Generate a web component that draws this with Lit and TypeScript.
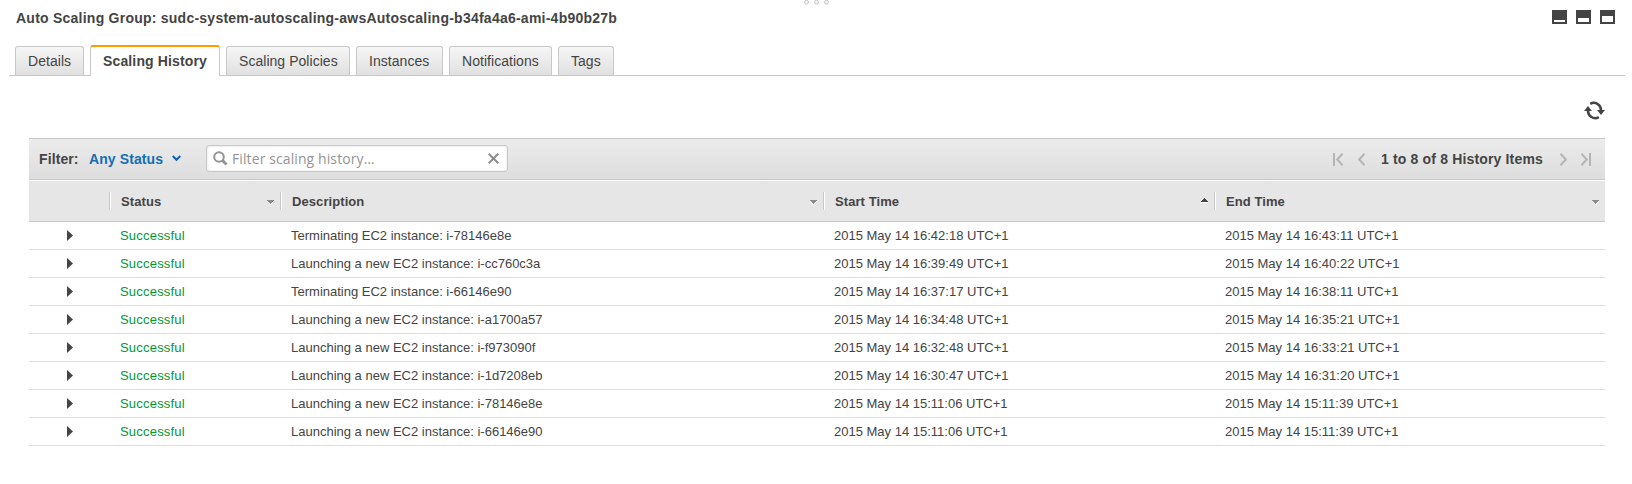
import { LitElement, html, css, svg } from "lit";
import { customElement } from "lit/decorators.js";

interface Activity {
  description: string;
  start: string;
  end: string;
}

const activities: Activity[] = [
  { description: "Terminating EC2 instance: i-78146e8e", start: "16:42:18", end: "16:43:11" },
  { description: "Launching a new EC2 instance: i-cc760c3a", start: "16:39:49", end: "16:40:22" },
  { description: "Terminating EC2 instance: i-66146e90", start: "16:37:17", end: "16:38:11" },
  { description: "Launching a new EC2 instance: i-a1700a57", start: "16:34:48", end: "16:35:21" },
  { description: "Launching a new EC2 instance: i-f973090f", start: "16:32:48", end: "16:33:21" },
  { description: "Launching a new EC2 instance: i-1d7208eb", start: "16:30:47", end: "16:31:20" },
  { description: "Launching a new EC2 instance: i-78146e8e", start: "15:11:06", end: "15:11:39" },
  { description: "Launching a new EC2 instance: i-66146e90", start: "15:11:06", end: "15:11:39" },
];

const tabs = [
  { name: "Details", width: 69 },
  { name: "Scaling History", width: 130 },
  { name: "Scaling Policies", width: 124 },
  { name: "Instances", width: 87 },
  { name: "Notifications", width: 103 },
  { name: "Tags", width: 56 },
];
const columns = ["Status", "Description", "Start Time", "End Time"];
const when = (time: string) => `2015 May 14 ${time} UTC+1`;

@customElement("app-root")
export class AppRoot extends LitElement {
  static styles = css`
    :host {
      display: block;
      position: relative;
      height: 484px;
      overflow: hidden;
      background: #fff;
      color: #444;
      font: 14px/18px "Liberation Sans", Arial, sans-serif;
    }
    svg { display: block; flex: none; }
    .grip { position: absolute; left: 804px; top: 0; }
    .head {
      display: flex;
      justify-content: space-between;
      padding: 9px 17px 0 16px;
      height: 36px;
      box-sizing: border-box;
      font-weight: bold;
    }
    .title { letter-spacing: 0.24px; }
    .panes { display: flex; gap: 9px; padding-top: 1px; }
    .tabs {
      display: flex;
      align-items: flex-end;
      gap: 6px;
      height: 39px;
      margin: 0 7px 0 9px;
      padding-left: 6px;
      border-bottom: 1px solid #c8c8c8;
    }
    .tab {
      box-sizing: border-box;
      height: 29px;
      padding: 5px 0 0 12px;
      border: 1px solid #c8c8c8;
      border-bottom: 0;
      border-radius: 3px 3px 0 0;
      background: linear-gradient(#f6f6f6, #e0e0e0);
      letter-spacing: 0.04px;
      white-space: nowrap;
    }
    .tab.active {
      height: 31px;
      margin-bottom: -1px;
      border-top: 2px solid #f90;
      background: #fff;
      font-weight: bold;
      letter-spacing: 0.14px;
    }
    .refresh { display: flex; justify-content: flex-end; padding: 25px 27.5px 0 0; height: 37px; }
    .table { width: 1576px; margin-left: 29px; }
    .bar {
      display: flex;
      align-items: center;
      box-sizing: border-box;
      height: 42px;
      padding: 0 14px 0 10px;
      border-top: 1px solid #c8c8c8;
      border-bottom: 1px solid #c8c8c8;
      background: linear-gradient(#ececec, #dddddd);
      font-weight: bold;
    }
    .label { width: 50px; letter-spacing: 0.1px; }
    .status { width: 83px; color: #146eb4; letter-spacing: 0.1px; }
    .caret { margin-top: -2px; }
    .search {
      display: flex;
      align-items: center;
      box-sizing: border-box;
      width: 302px;
      height: 27px;
      margin: -1px 0 0 24px;
      padding: 0 8px 0 6px;
      border: 1px solid #c8c8c8;
      border-radius: 3px;
      background: #fff;
      box-shadow: inset 0 0 3px #ddd;
      color: #949494;
      font: 14px/18px "Open Sans", sans-serif;
      letter-spacing: 0.1px;
    }
    .placeholder { flex: 1; padding-left: 4px; white-space: nowrap; }
    .pager { display: flex; align-items: center; margin-left: auto; }
    .pager svg { margin-top: 1px; }
    .count { width: 161.5px; margin: 0 17.5px 0 16px; letter-spacing: 0.16px; white-space: nowrap; }
    .prev { margin-left: 15px; }
    .last { margin-left: 14px; }
    .columns, .row { display: grid; grid-template-columns: 80px 171px 543px 391px 391px; }
    .columns {
      height: 40px;
      margin-top: 1px;
      align-items: center;
      border-bottom: 1px solid #c8c8c8;
      background: #e6e6e6;
      font-size: 13px;
      font-weight: bold;
      letter-spacing: 0.08px;
    }
    .column {
      display: flex;
      align-items: center;
      justify-content: space-between;
      height: 18px;
      padding: 0 6px 0 11px;
      border-left: 1px solid #c8c8c8;
      box-shadow: inset 1px 0 #fff;
    }
    .name { margin-top: 2px; }
    .row {
      height: 27px;
      border-bottom: 1px solid #ddd;
      font-size: 13px;
      line-height: 27px;
    }
    .cell { padding-left: 11px; }
    .ok { color: #093; letter-spacing: 0.2px; }
    .arrow { padding: 8px 0 0 38px; }
  `;

  private pane(top: number, height: number) {
    return html`<svg width="15" height="14"><path fill="#444" d="M0 0H15V14H0Z" /><path fill="#fff" d="M2 ${top}h11v${height}h-11z" /></svg>`;
  }

  private sortMark(up: boolean) {
    return html`<svg width="7" height="8" shape-rendering="crispEdges">
      ${up
        ? svg`<path d="M0 5h7v1H0z" fill="#fff"/><path d="M3 1h1v1h1v1h1v1h1v1H0V4h1V3h1V2h1z" fill="#444"/>`
        : svg`<path d="M0 4h7v1H6v1H5v1H4v1H3V7H2V6H1V5H0z" fill="#fff"/><path d="M0 3h7v1H6v1H5v1H4v1H3V6H2V5H1V4H0z" fill="#8c8c8c"/>`}
    </svg>`;
  }

  private chevron(name: string, path: string, width: number) {
    return html`<svg class=${name} width=${width} height="13" fill="none" stroke="#b4b4b4" stroke-width="2"><path d=${path} /></svg>`;
  }

  render() {
    return html`
      <svg class="grip" width="26" height="6">
        ${[2.5, 12.5, 22.5].map((x) => svg`<circle cx=${x} cy="2.2" r="2" fill="#f4f4f4" stroke="#c8c8c8"/>`)}
      </svg>
      <div class="head">
        <div class="title">Auto Scaling Group: sudc-system-autoscaling-awsAutoscaling-b34fa4a6-ami-4b90b27b</div>
        <div class="panes">${this.pane(10, 2)}${this.pane(8, 4)}${this.pane(6, 6)}</div>
      </div>
      <div class="tabs">
        ${tabs.map((tab, i) => html`<div class="tab ${i === 1 ? "active" : ""}" style="width:${tab.width}px">${tab.name}</div>`)}
      </div>
      <div class="refresh">
        <svg width="21" height="19" viewBox="0 0 21 19">
          <g fill="none" stroke="#444" stroke-width="2.5">
            <path d="M6.2 2.9A7.2 7.2 0 0 1 17 9.5" />
            <path d="M14.8 16.1A7.2 7.2 0 0 1 4 9.5" />
          </g>
          <path fill="#444" d="M13 9h8l-4 5zM0 10h8L4 5z" />
        </svg>
      </div>
      <div class="table">
        <div class="bar">
          <span class="label">Filter:</span>
          <span class="status">Any Status</span>
          <svg class="caret" width="10" height="7" fill="none" stroke="#0f62b5" stroke-width="2"><path d="M.7 1L4.5 4.8L8.3 1" /></svg>
          <div class="search">
            <svg width="15" height="15" fill="none" stroke="#949494"><circle cx="6" cy="6" r="4.8" stroke-width="2" /><path d="M9.5 9.5l4 4" stroke-width="3" /></svg>
            <span class="placeholder">Filter scaling history…</span>
            <svg width="11" height="11" fill="none" stroke="#8c8c8c" stroke-width="2"><path d="M.7 .7l9.6 9.6M10.3 .7l-9.6 9.6" /></svg>
          </div>
          <div class="pager">
            ${this.chevron("first", "M1 0v13M9.6 .8L4.2 6.5l5.4 5.7", 10)}
            ${this.chevron("prev", "M6.6 .8L1.2 6.5l5.4 5.7", 7)}
            <span class="count">1 to 8 of 8 History Items</span>
            ${this.chevron("next", "M.4 .8L5.8 6.5L.4 12.2", 7)}
            ${this.chevron("last", "M.4 .8L5.8 6.5L.4 12.2M9 0v13", 10)}
          </div>
        </div>
        <div class="columns">
          <span></span>
          ${columns.map((name, i) => html`<div class="column"><span class="name">${name}</span>${this.sortMark(i === 2)}</div>`)}
        </div>
        ${activities.map(
          (a) => html`<div class="row">
            <div class="arrow"><svg width="6" height="11"><path fill="#444" d="M0 0L6 5.5L0 11z" /></svg></div>
            <div class="cell ok">Successful</div>
            <div class="cell">${a.description}</div>
            <div class="cell">${when(a.start)}</div>
            <div class="cell">${when(a.end)}</div>
          </div>`,
        )}
      </div>
    `;
  }
}
